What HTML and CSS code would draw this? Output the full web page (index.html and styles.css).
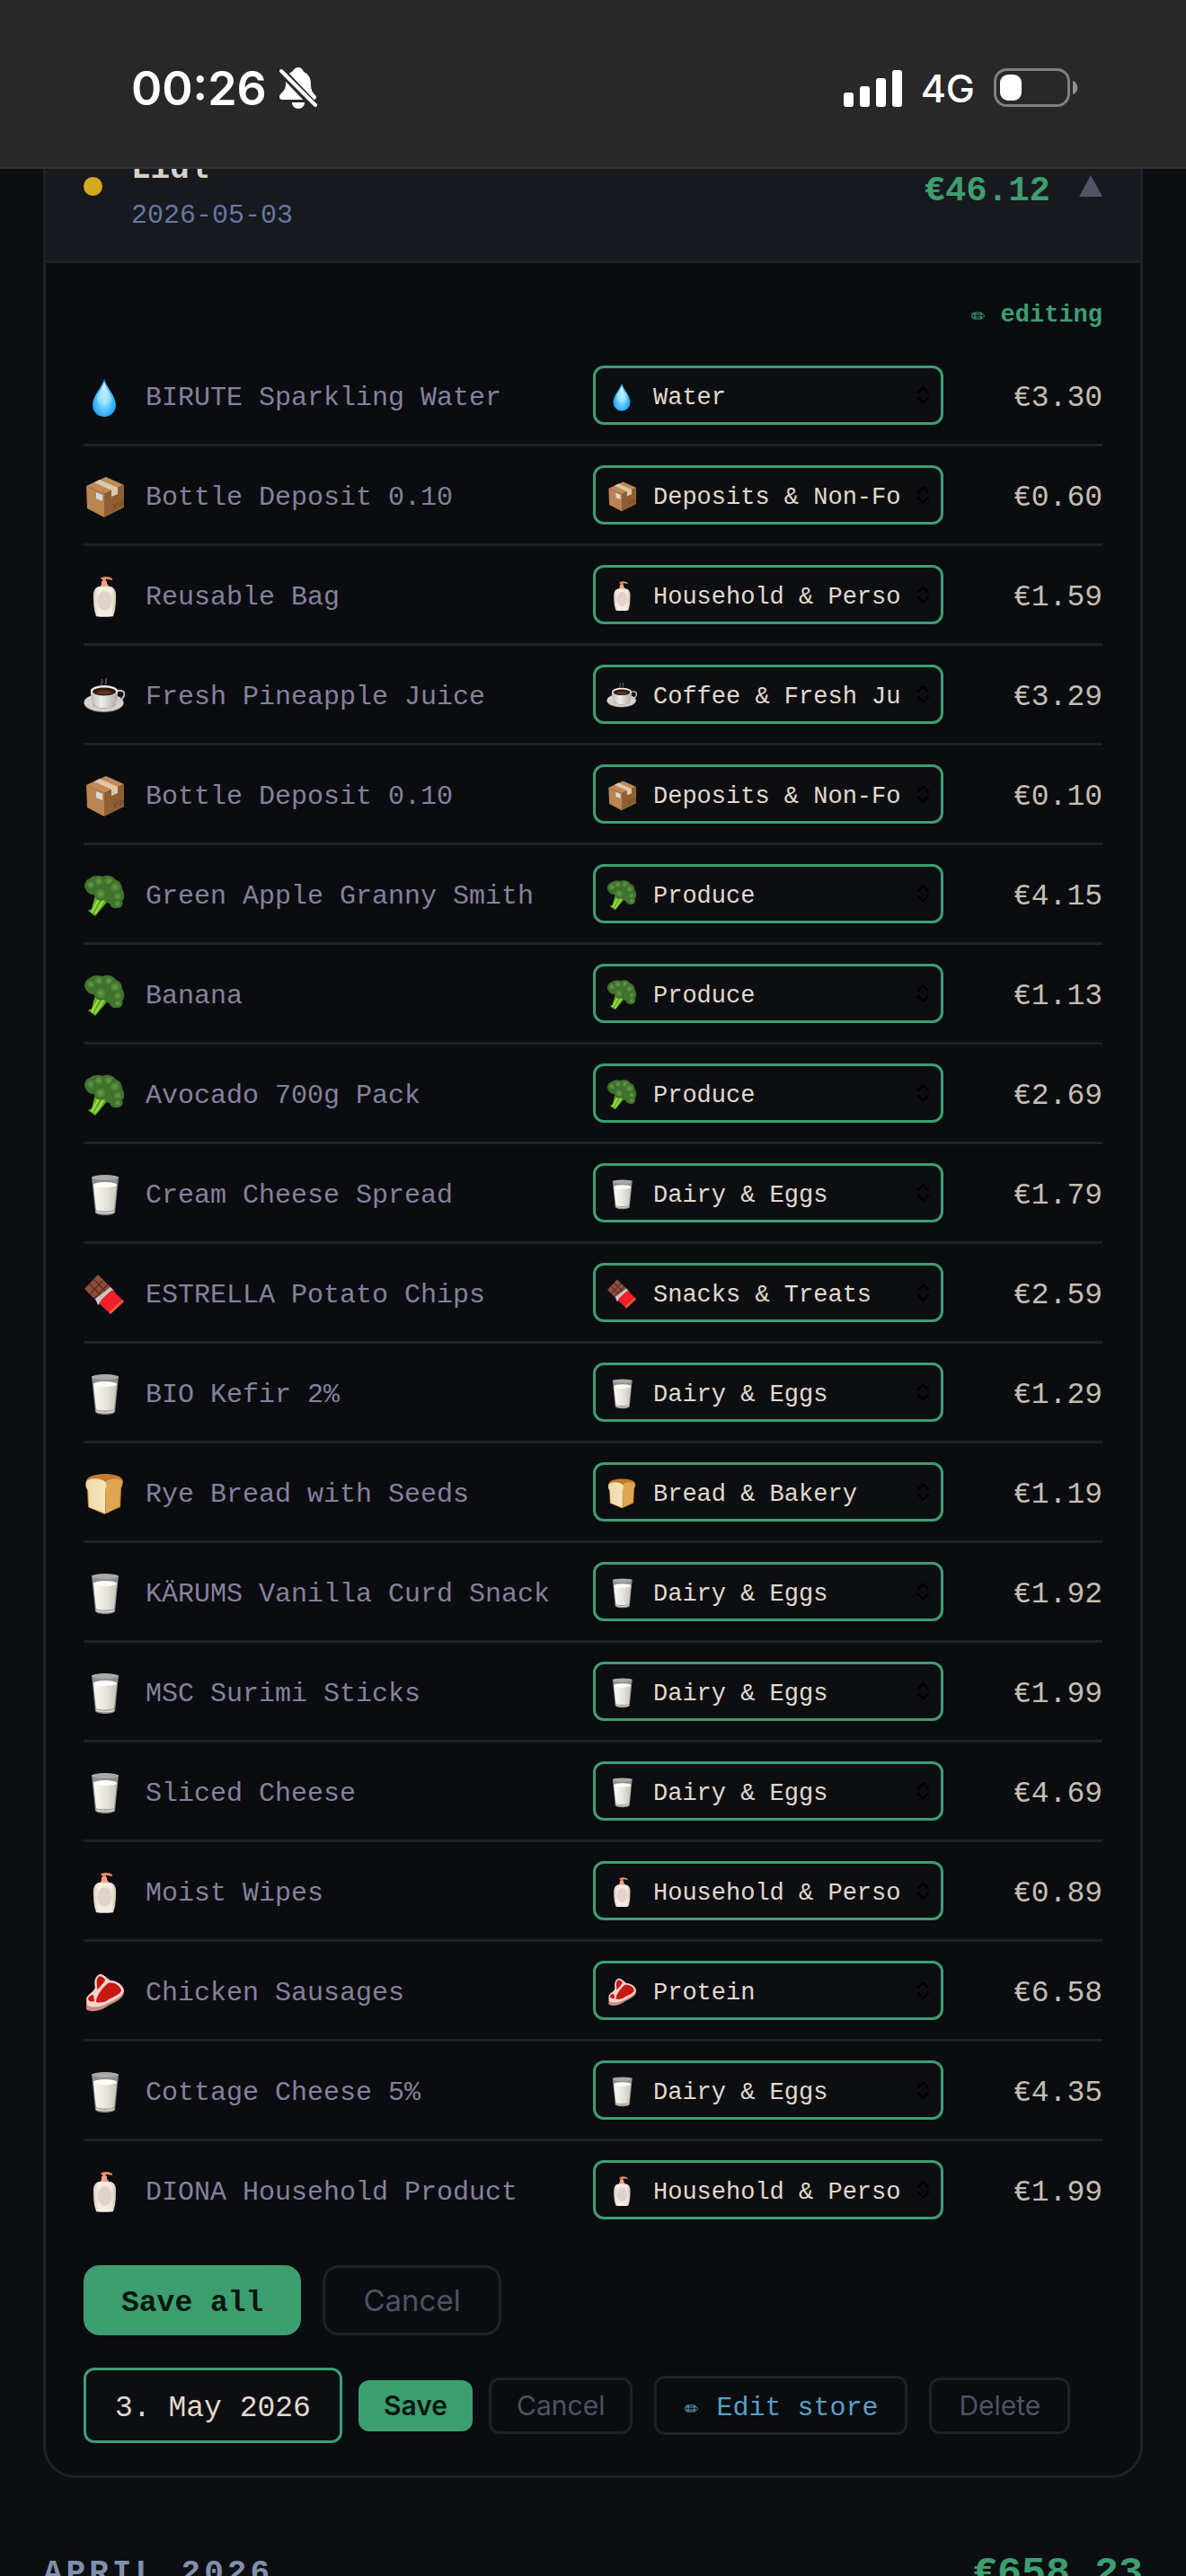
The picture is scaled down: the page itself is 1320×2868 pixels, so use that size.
FILE: index.html
```html
<!DOCTYPE html>
<html lang="en">
<head>
<meta charset="utf-8">
<meta name="viewport" content="width=device-width, initial-scale=1">
<title>Receipts</title>
<link rel="stylesheet" href="styles.css">
</head>
<body>
<svg class="sprite" width="0" height="0" aria-hidden="true">
  <defs>
    <radialGradient id="g-drop" cx=".5" cy=".55" r=".6"><stop offset="0" stop-color="#a6e8ff"/><stop offset=".45" stop-color="#5cc8ff"/><stop offset="1" stop-color="#0a93ee"/></radialGradient>
    <linearGradient id="g-shine" x1="0" y1="0" x2="0" y2="1"><stop offset="0" stop-color="#fff"/><stop offset="1" stop-color="#b5ecff" stop-opacity=".2"/></linearGradient>
    <linearGradient id="g-bottle" x1="0" y1="0" x2="1" y2="0"><stop offset="0" stop-color="#dccfc2"/><stop offset=".25" stop-color="#f6efe6"/><stop offset=".8" stop-color="#f3e9dd"/><stop offset="1" stop-color="#cfc0b0"/></linearGradient>
    <linearGradient id="g-cup" x1="0" y1="0" x2="1" y2="0"><stop offset="0" stop-color="#b9b8b2"/><stop offset=".4" stop-color="#f0efeb"/><stop offset="1" stop-color="#a9a8a2"/></linearGradient>
    <linearGradient id="g-milk" x1="0" y1="0" x2="1" y2="0"><stop offset="0" stop-color="#fbfaf6"/><stop offset=".55" stop-color="#e6e3d9"/><stop offset="1" stop-color="#c9c5ba"/></linearGradient>
    <linearGradient id="g-bread" x1="0" y1="0" x2="1" y2="0"><stop offset="0" stop-color="#efd9a6"/><stop offset="1" stop-color="#f6e6bf"/></linearGradient>
    <radialGradient id="g-leaf"><stop offset="0" stop-color="#66a044"/><stop offset="1" stop-color="#38692a"/></radialGradient>
  </defs>
  <symbol id="water" viewBox="0 -6 46 52">
    <path d="M23 2C26 12 36 21 36 31a13 13 0 0 1-26 0C10 21 20 12 23 2Z" fill="url(#g-drop)"/>
    <path d="M23 5c2 9 8 14 8 20 0 4-4 6-8 6s-8-2-8-6c0-6 6-11 8-20Z" fill="url(#g-shine)"/>
  </symbol>
  <symbol id="box" viewBox="0 -6 46 52">
    <path d="M3 10 25 0l20 9-22 10Z" fill="#c08a55"/>
    <path d="M3 10l20 9v26L4 35Z" fill="#bb8450"/>
    <path d="M23 19 45 9v25L23 45Z" fill="#8f5f33"/>
    <path d="M12 6l6-3 20 9v7l-7 3v-7Z" fill="#dcc9ad"/>
    <path d="M14 17l7 3v7l-7-3Z" fill="#d8dadc"/>
    <path d="M33 30c0 4 5 2 5-2M35 32v4M41 27v6M44 26v6" fill="none" stroke="#6b4424"/>
  </symbol>
  <symbol id="soap" viewBox="0 -6 46 52">
    <path d="M20 1c4-2 9-1 12 1v2c-3-1-5-1-7-1v2h-4V3h-2Z" fill="#e8896b"/>
    <path d="M20 5h6v3l2 2v3h-9v-3l1-2Z" fill="#f3a083"/>
    <path d="M17 11h13c4 1 6 5 6 9 0 8 0 16-3 24-1 1-18 1-19 0-3-8-3-16-3-24 0-4 2-8 6-9Z" fill="url(#g-bottle)"/>
    <ellipse cx="23.500" cy="27" rx="8" ry="11" fill="#e3d2cb"/>
  </symbol>
  <symbol id="coffee" viewBox="0 -6 46 52">
    <path d="M20 10c-2-3 3-3 0-7M24 9c4-3-2-4 2-7" fill="none" stroke="#55585c" stroke-width="1.500"/>
    <ellipse cx="22.500" cy="30" rx="22" ry="10" fill="#8f8e86"/>
    <ellipse cx="22.500" cy="29" rx="22" ry="10" fill="#d5d3cb"/>
    <ellipse cx="23" cy="31" rx="13" ry="5" fill="#a8a69e"/>
    <path d="M36 17c6-3 11 0 9 5-1 3-5 5-10 5" fill="none" stroke="#c4c3be" stroke-width="2"/>
    <path d="M8 16h30c1 10-3 19-11 19h-8C11 35 7 26 8 16Z" fill="url(#g-cup)"/>
    <ellipse cx="23" cy="16" rx="15" ry="6" fill="#efeeea"/>
    <ellipse cx="23" cy="17" rx="13" ry="4.500" fill="#35190e"/>
    <ellipse cx="23" cy="18" rx="8" ry="2.500" fill="#5b3320"/>
  </symbol>
  <symbol id="broccoli" viewBox="0 -6 46 52">
    <path d="M13 22l-4 15-4 2 8 6 15-18Z" fill="#62b01c"/>
    <path d="M17 26 9 41M22 28 13 42" stroke="#a2dc55" stroke-width="2" fill="none"/>
    <path d="M7 3c5-4 10-3 14-2 6-3 13 0 15 4 5 1 7 6 7 10 3 5 3 10 0 13 2 4-1 8-5 8-5 1-8-1-9-5-5-1-6-3-6-6-5 2-9 0-10-4-6 1-10-3-12-9 0-4 2-8 6-9Z" fill="#41742e"/>
    <circle cx="8" cy="10" r="6" fill="url(#g-leaf)"/><circle cx="17" cy="6" r="6" fill="url(#g-leaf)"/>
    <circle cx="28" cy="6" r="6" fill="url(#g-leaf)"/><circle cx="35" cy="13" r="7" fill="url(#g-leaf)"/>
    <circle cx="38" cy="23" r="6" fill="url(#g-leaf)"/><circle cx="38" cy="31" r="5" fill="url(#g-leaf)"/>
    <circle cx="19" cy="20" r="7.500" fill="url(#g-leaf)"/>
  </symbol>
  <symbol id="milk" viewBox="0 -6 46 52">
    <path d="M9 2h30l-4 40c-2 4-20 4-22 0Z" fill="#8d8e8e"/>
    <ellipse cx="24" cy="3" rx="15" ry="3" fill="#a9aaaa"/>
    <path d="M11 11h26l-3 28c-3 2-18 2-20 0Z" fill="url(#g-milk)"/>
    <ellipse cx="24" cy="11" rx="13" ry="3" fill="#fffefa"/>
    <path d="M14 41c4 2 16 2 20 0" fill="none" stroke="#d5d5d2" stroke-width="1.500"/>
  </symbol>
  <symbol id="chocolate" viewBox="0 -6 46 52">
    <path d="M16 0l15 15-15 16L1 16Z" fill="#8d4e3b"/>
    <path d="M11 5l15 15M6 10l15 15M22 6 7 22M27 11 12 27" stroke="#5e2d20" stroke-width="1.500"/>
    <path d="M30 14l4 4-18 16-3-7Z" fill="#c9c8c8"/>
    <path d="M32 17l13 13-15 14-13-12c3-5 9-10 15-15Z" fill="#f01f28"/>
    <path d="M45 30 30 44l-2-2 15-14Z" fill="#d9603e"/>
  </symbol>
  <symbol id="bread" viewBox="0 -6 46 52">
    <path d="M3 8C4 2 15 0 24 0c9 0 19 2 20 8 0 4-2 6-2 9l-1 20-18 8-18-8-1-19C2 15 2 11 3 8Z" fill="#c47a2b"/>
    <path d="M24 10c3-6 18-6 19-1 0 4-2 5-2 8l-1 19-15 8Z" fill="#dda650"/>
    <path d="M3 9c2-5 18-5 22 1 1 4-1 6-1 9v25L6 37 5 18C3 16 2 12 3 9Z" fill="url(#g-bread)"/>
  </symbol>
  <symbol id="steak" viewBox="0 -6 46 52">
    <path d="M3 32c2-6 8-8 10-13-1-8-1-14 5-17 5 0 8 5 12 7 7 0 14 6 15 12 0 9-11 12-19 17-7 5-19 7-23 3Z" fill="#c98a80"/>
    <path d="M3 29c2-5 8-7 10-12-1-7-1-12 5-15 5 0 8 5 12 7 7 0 14 5 15 11-2 8-11 10-19 15-7 4-19 5-22 1Z" fill="#f4d4cc"/>
    <path d="M15 15c-1-6 0-9 3-11 4 1 6 3 6 5-3 4-6 8-9 10Z" fill="#c41410"/>
    <path d="M27 12c7-2 14 3 15 8-1 5-9 7-14 10-5 4-10 4-14 3 0-6 6-15 13-21Z" fill="#c81812"/>
    <path d="M5 29c1-2 3-4 6-4l1 7c-4 1-7 0-7-3Z" fill="#c41410"/>
  </symbol>
  <symbol id="pencil" viewBox="0 0 16 9">
    <path d="M3 1h8l4 3.500L11 8H3C0 8 0 1 3 1ZM1 3h11M1 6h11M4 1v7M11 1v7" fill="none" stroke="currentColor"/>
  </symbol>
  <symbol id="updown" viewBox="0 0 15 20">
    <path d="M1.500 7.500 7.500 1.500l6 6M1.500 12.500l6 6 6-6" fill="none" stroke="#000" stroke-width="2.500"/>
  </symbol>
</svg>

<header class="status">
  <div class="status-side">
    <span class="clock">00:26</span>
    <svg width="42" height="46" viewBox="0 0 42 46" aria-label="Silent">
      <path d="M21 0c3 0 5 2 6 5 5 2 8 7 8 13 0 8 2 10 5 13 2 2 1 5-2 5H4c-4 0-5-3-3-6 4-4 6-6 6-12C7 11 9 7 14 5c2-3 4-5 7-5Z" fill="#fff"/>
      <path d="M14 39h14c0 4-3 7-7 7s-7-3-7-7Z" fill="#fff"/>
      <path d="M-1 1 41 45" stroke="#282828" stroke-width="9"/>
      <path d="M2 4 40 42" stroke="#fff" stroke-width="4" stroke-linecap="round"/>
    </svg>
  </div>
  <div class="status-side status-right">
    <svg width="65" height="41" viewBox="0 0 65 41" fill="#fff" aria-label="Signal">
      <rect y="25" width="11" height="16" rx="3"/><rect x="18" y="18" width="11" height="23" rx="3"/><rect x="36" y="9" width="11" height="32" rx="3"/><rect x="54" width="11" height="41" rx="3"/>
    </svg>
    <span class="network">4G</span>
    <svg width="94" height="44" viewBox="0 0 94 44" aria-label="Battery">
      <rect x="1.500" y="1.500" width="82" height="40" rx="13" fill="none" stroke="#808080" stroke-width="3"/>
      <rect x="7" y="7" width="24" height="29" rx="9" fill="#fff"/>
      <path d="M88 14c7 2 7 13 0 15Z" fill="#909090"/>
    </svg>
  </div>
</header>

<main class="page">
  <section class="card">
    <button class="card-head" type="button" aria-expanded="true">
      <span class="dot"></span>
      <span class="store"><span class="store-name">Lidl</span><span class="store-date">2026-05-03</span></span>
      <span class="total">€46.12</span>
      <svg class="caret" width="26" height="24" viewBox="0 0 26 24"><path d="M13 0 26 24H0Z" fill="#505668"/></svg>
    </button>

    <div class="card-body">
      <p class="mode"><svg width="16" height="9"><use href="#pencil"/></svg>editing</p>

      <ul class="items">
        <li><svg class="icon"><use href="#water"/></svg><label for="c1">BIRUTE Sparkling Water</label><span class="pick"><select id="c1"><option>Water</option></select><svg class="mini"><use href="#water"/></svg><svg class="arrows"><use href="#updown"/></svg></span><span class="price">€3.30</span></li>
        <li><svg class="icon"><use href="#box"/></svg><label for="c2">Bottle Deposit 0.10</label><span class="pick"><select id="c2"><option>Deposits &amp; Non-Food</option></select><svg class="mini"><use href="#box"/></svg><svg class="arrows"><use href="#updown"/></svg></span><span class="price">€0.60</span></li>
        <li><svg class="icon"><use href="#soap"/></svg><label for="c3">Reusable Bag</label><span class="pick"><select id="c3"><option>Household &amp; Personal</option></select><svg class="mini"><use href="#soap"/></svg><svg class="arrows"><use href="#updown"/></svg></span><span class="price">€1.59</span></li>
        <li><svg class="icon"><use href="#coffee"/></svg><label for="c4">Fresh Pineapple Juice</label><span class="pick"><select id="c4"><option>Coffee &amp; Fresh Juice</option></select><svg class="mini"><use href="#coffee"/></svg><svg class="arrows"><use href="#updown"/></svg></span><span class="price">€3.29</span></li>
        <li><svg class="icon"><use href="#box"/></svg><label for="c5">Bottle Deposit 0.10</label><span class="pick"><select id="c5"><option>Deposits &amp; Non-Food</option></select><svg class="mini"><use href="#box"/></svg><svg class="arrows"><use href="#updown"/></svg></span><span class="price">€0.10</span></li>
        <li><svg class="icon"><use href="#broccoli"/></svg><label for="c6">Green Apple Granny Smith</label><span class="pick"><select id="c6"><option>Produce</option></select><svg class="mini"><use href="#broccoli"/></svg><svg class="arrows"><use href="#updown"/></svg></span><span class="price">€4.15</span></li>
        <li><svg class="icon"><use href="#broccoli"/></svg><label for="c7">Banana</label><span class="pick"><select id="c7"><option>Produce</option></select><svg class="mini"><use href="#broccoli"/></svg><svg class="arrows"><use href="#updown"/></svg></span><span class="price">€1.13</span></li>
        <li><svg class="icon"><use href="#broccoli"/></svg><label for="c8">Avocado 700g Pack</label><span class="pick"><select id="c8"><option>Produce</option></select><svg class="mini"><use href="#broccoli"/></svg><svg class="arrows"><use href="#updown"/></svg></span><span class="price">€2.69</span></li>
        <li><svg class="icon"><use href="#milk"/></svg><label for="c9">Cream Cheese Spread</label><span class="pick"><select id="c9"><option>Dairy &amp; Eggs</option></select><svg class="mini"><use href="#milk"/></svg><svg class="arrows"><use href="#updown"/></svg></span><span class="price">€1.79</span></li>
        <li><svg class="icon"><use href="#chocolate"/></svg><label for="c10">ESTRELLA Potato Chips</label><span class="pick"><select id="c10"><option>Snacks &amp; Treats</option></select><svg class="mini"><use href="#chocolate"/></svg><svg class="arrows"><use href="#updown"/></svg></span><span class="price">€2.59</span></li>
        <li><svg class="icon"><use href="#milk"/></svg><label for="c11">BIO Kefir 2%</label><span class="pick"><select id="c11"><option>Dairy &amp; Eggs</option></select><svg class="mini"><use href="#milk"/></svg><svg class="arrows"><use href="#updown"/></svg></span><span class="price">€1.29</span></li>
        <li><svg class="icon"><use href="#bread"/></svg><label for="c12">Rye Bread with Seeds</label><span class="pick"><select id="c12"><option>Bread &amp; Bakery</option></select><svg class="mini"><use href="#bread"/></svg><svg class="arrows"><use href="#updown"/></svg></span><span class="price">€1.19</span></li>
        <li><svg class="icon"><use href="#milk"/></svg><label for="c13">KÄRUMS Vanilla Curd Snack</label><span class="pick"><select id="c13"><option>Dairy &amp; Eggs</option></select><svg class="mini"><use href="#milk"/></svg><svg class="arrows"><use href="#updown"/></svg></span><span class="price">€1.92</span></li>
        <li><svg class="icon"><use href="#milk"/></svg><label for="c14">MSC Surimi Sticks</label><span class="pick"><select id="c14"><option>Dairy &amp; Eggs</option></select><svg class="mini"><use href="#milk"/></svg><svg class="arrows"><use href="#updown"/></svg></span><span class="price">€1.99</span></li>
        <li><svg class="icon"><use href="#milk"/></svg><label for="c15">Sliced Cheese</label><span class="pick"><select id="c15"><option>Dairy &amp; Eggs</option></select><svg class="mini"><use href="#milk"/></svg><svg class="arrows"><use href="#updown"/></svg></span><span class="price">€4.69</span></li>
        <li><svg class="icon"><use href="#soap"/></svg><label for="c16">Moist Wipes</label><span class="pick"><select id="c16"><option>Household &amp; Personal</option></select><svg class="mini"><use href="#soap"/></svg><svg class="arrows"><use href="#updown"/></svg></span><span class="price">€0.89</span></li>
        <li><svg class="icon"><use href="#steak"/></svg><label for="c17">Chicken Sausages</label><span class="pick"><select id="c17"><option>Protein</option></select><svg class="mini"><use href="#steak"/></svg><svg class="arrows"><use href="#updown"/></svg></span><span class="price">€6.58</span></li>
        <li><svg class="icon"><use href="#milk"/></svg><label for="c18">Cottage Cheese 5%</label><span class="pick"><select id="c18"><option>Dairy &amp; Eggs</option></select><svg class="mini"><use href="#milk"/></svg><svg class="arrows"><use href="#updown"/></svg></span><span class="price">€4.35</span></li>
        <li><svg class="icon"><use href="#soap"/></svg><label for="c19">DIONA Household Product</label><span class="pick"><select id="c19"><option>Household &amp; Personal</option></select><svg class="mini"><use href="#soap"/></svg><svg class="arrows"><use href="#updown"/></svg></span><span class="price">€1.99</span></li>
      </ul>

      <div class="actions">
        <button class="btn-lg primary mono" type="button">Save all</button>
        <button class="btn-lg outline" type="button">Cancel</button>
      </div>
      <div class="edit-row">
        <div class="date-edit">
          <input class="date" type="text" value="3. May 2026" aria-label="Receipt date">
          <button class="btn primary save" type="button">Save</button>
          <button class="btn outline" type="button">Cancel</button>
        </div>
        <button class="btn wide edit-store" type="button"><svg width="18" height="9"><use href="#pencil"/></svg>Edit store</button>
        <button class="btn wide" type="button">Delete</button>
      </div>
    </div>
  </section>

  <div class="month">
    <h2>April 2026</h2>
    <strong>€658.23</strong>
  </div>
</main>
</body>
</html>
```

FILE: styles.css
```css
:root {
  --page: #0d0e12;
  --card: #0a0c10;
  --head: #17191e;
  --line: #1f2028;
  --green: #3d9e70;
  --cream: #e0dacd;
  --mono: "Liberation Mono", "Courier New", monospace;
  --sans: Inter, "Liberation Sans", sans-serif;
}

* { box-sizing: border-box; }

body {
  margin: 0;
  height: 100vh;
  overflow: hidden;
  background: var(--page);
  font-family: var(--mono);
}

.sprite { position: absolute; }

/* Phone status bar, drawn over the scrolled page */
.status {
  position: fixed;
  inset: 0 0 auto;
  z-index: 2;
  height: 188px;
  padding: 10px 120px 0 146px;
  display: flex;
  justify-content: space-between;
  align-items: center;
  background: #282828;
  border-bottom: 2px solid #313336;
  color: #fff;
  font-family: var(--sans);
}
.status-side { display: flex; align-items: center; gap: 14px; }
.status-right { gap: 21px; }
.clock { font-size: 52px; font-weight: 600; }
.network { font-size: 43px; font-weight: 500; }

.page { padding: 123px 48px 0; }

.card {
  border: 3px solid var(--line);
  border-radius: 36px;
  background: var(--card);
  overflow: hidden;
}

.card-head {
  width: 100%;
  padding: 36px 42px 32px;
  display: flex;
  align-items: center;
  gap: 32px;
  border: 0;
  border-bottom: 3px solid var(--line);
  background: var(--head);
  font-family: inherit;
  text-align: left;
}
.dot { width: 21px; height: 21px; border-radius: 50%; background: #d4a820; }
.dot, .caret { margin-bottom: 6px; }
.store { flex: 1; display: flex; flex-direction: column; gap: 6px; }
.store-name { font-size: 36px; line-height: 54px; font-weight: 700; color: #d8d2c6; }
.store-date { font-size: 30px; line-height: 36px; color: #6677a3; }
.total { padding-top: 6px; font-size: 39px; font-weight: 700; color: var(--green); }

.card-body { padding: 36px 42px; }

.mode {
  margin: 0 0 12px;
  display: flex;
  justify-content: flex-end;
  align-items: center;
  gap: 17px;
  font-size: 27px;
  line-height: 45px;
  font-weight: 700;
  color: var(--green);
}

.items { margin: 0; padding: 0; list-style: none; }
.items li {
  padding: 21px 0;
  display: grid;
  grid-template-columns: 45px 1fr 390px 153px;
  column-gap: 24px;
  align-items: center;
  border-bottom: 3px solid var(--line);
}
.items li:last-child { border-bottom: 0; }
.items label { padding-top: 6px; font-size: 30px; color: #85819c; }
.icon { width: 46px; height: 52px; }
.price { padding-top: 6px; font-size: 33px; text-align: right; color: #c4beb2; }

.pick { position: relative; display: block; }
.pick select {
  display: block;
  width: 100%;
  height: 66px;
  padding: 6px 45px 0 64px;
  appearance: none;
  border: 3px solid var(--green);
  border-radius: 12px;
  background: var(--page);
  color: var(--cream);
  font: 27px var(--mono);
  text-overflow: clip;
}
.mini, .arrows { position: absolute; pointer-events: none; }
.mini { left: 15px; top: 14px; width: 34px; height: 38px; }
.arrows { right: 15px; top: 23px; width: 15px; height: 20px; }

button { font: 30px var(--sans); }
.btn-lg, .btn { border: 3px solid var(--line); color: #4d5365; background: none; }
.btn-lg { height: 78px; padding: 0 42px; border-radius: 18px; font-size: 33px; }
.btn { height: 63px; padding: 0 28px; border-radius: 12px; }
.primary { border: 0; background: var(--green); color: #07170f; font-weight: 600; }
.mono { padding-top: 6px; font-family: var(--mono); font-weight: 700; }
.save { height: 57px; }
.wide { padding: 0 30px; }

.actions { margin-top: 30px; display: flex; gap: 24px; }
.edit-row { margin-top: 36px; display: flex; align-items: center; gap: 24px; }
.date-edit { display: flex; align-items: center; gap: 18px; }
.date {
  width: 288px;
  height: 84px;
  padding: 6px 0 0;
  border: 3px solid var(--green);
  border-radius: 12px;
  background: var(--page);
  color: var(--cream);
  font: 33px var(--mono);
  text-align: center;
}
.edit-store {
  height: 66px;
  padding-top: 6px;
  display: flex;
  align-items: center;
  gap: 18px;
  font-family: var(--mono);
  color: #5a9fc4;
}

.month {
  margin-top: 82px;
  display: flex;
  justify-content: space-between;
  align-items: center;
  line-height: 50px;
}
.month h2 {
  margin: 0;
  font-size: 36px;
  letter-spacing: 4px;
  text-transform: uppercase;
  color: #8090ac;
}
.month strong { font-size: 45px; color: var(--green); }
```
